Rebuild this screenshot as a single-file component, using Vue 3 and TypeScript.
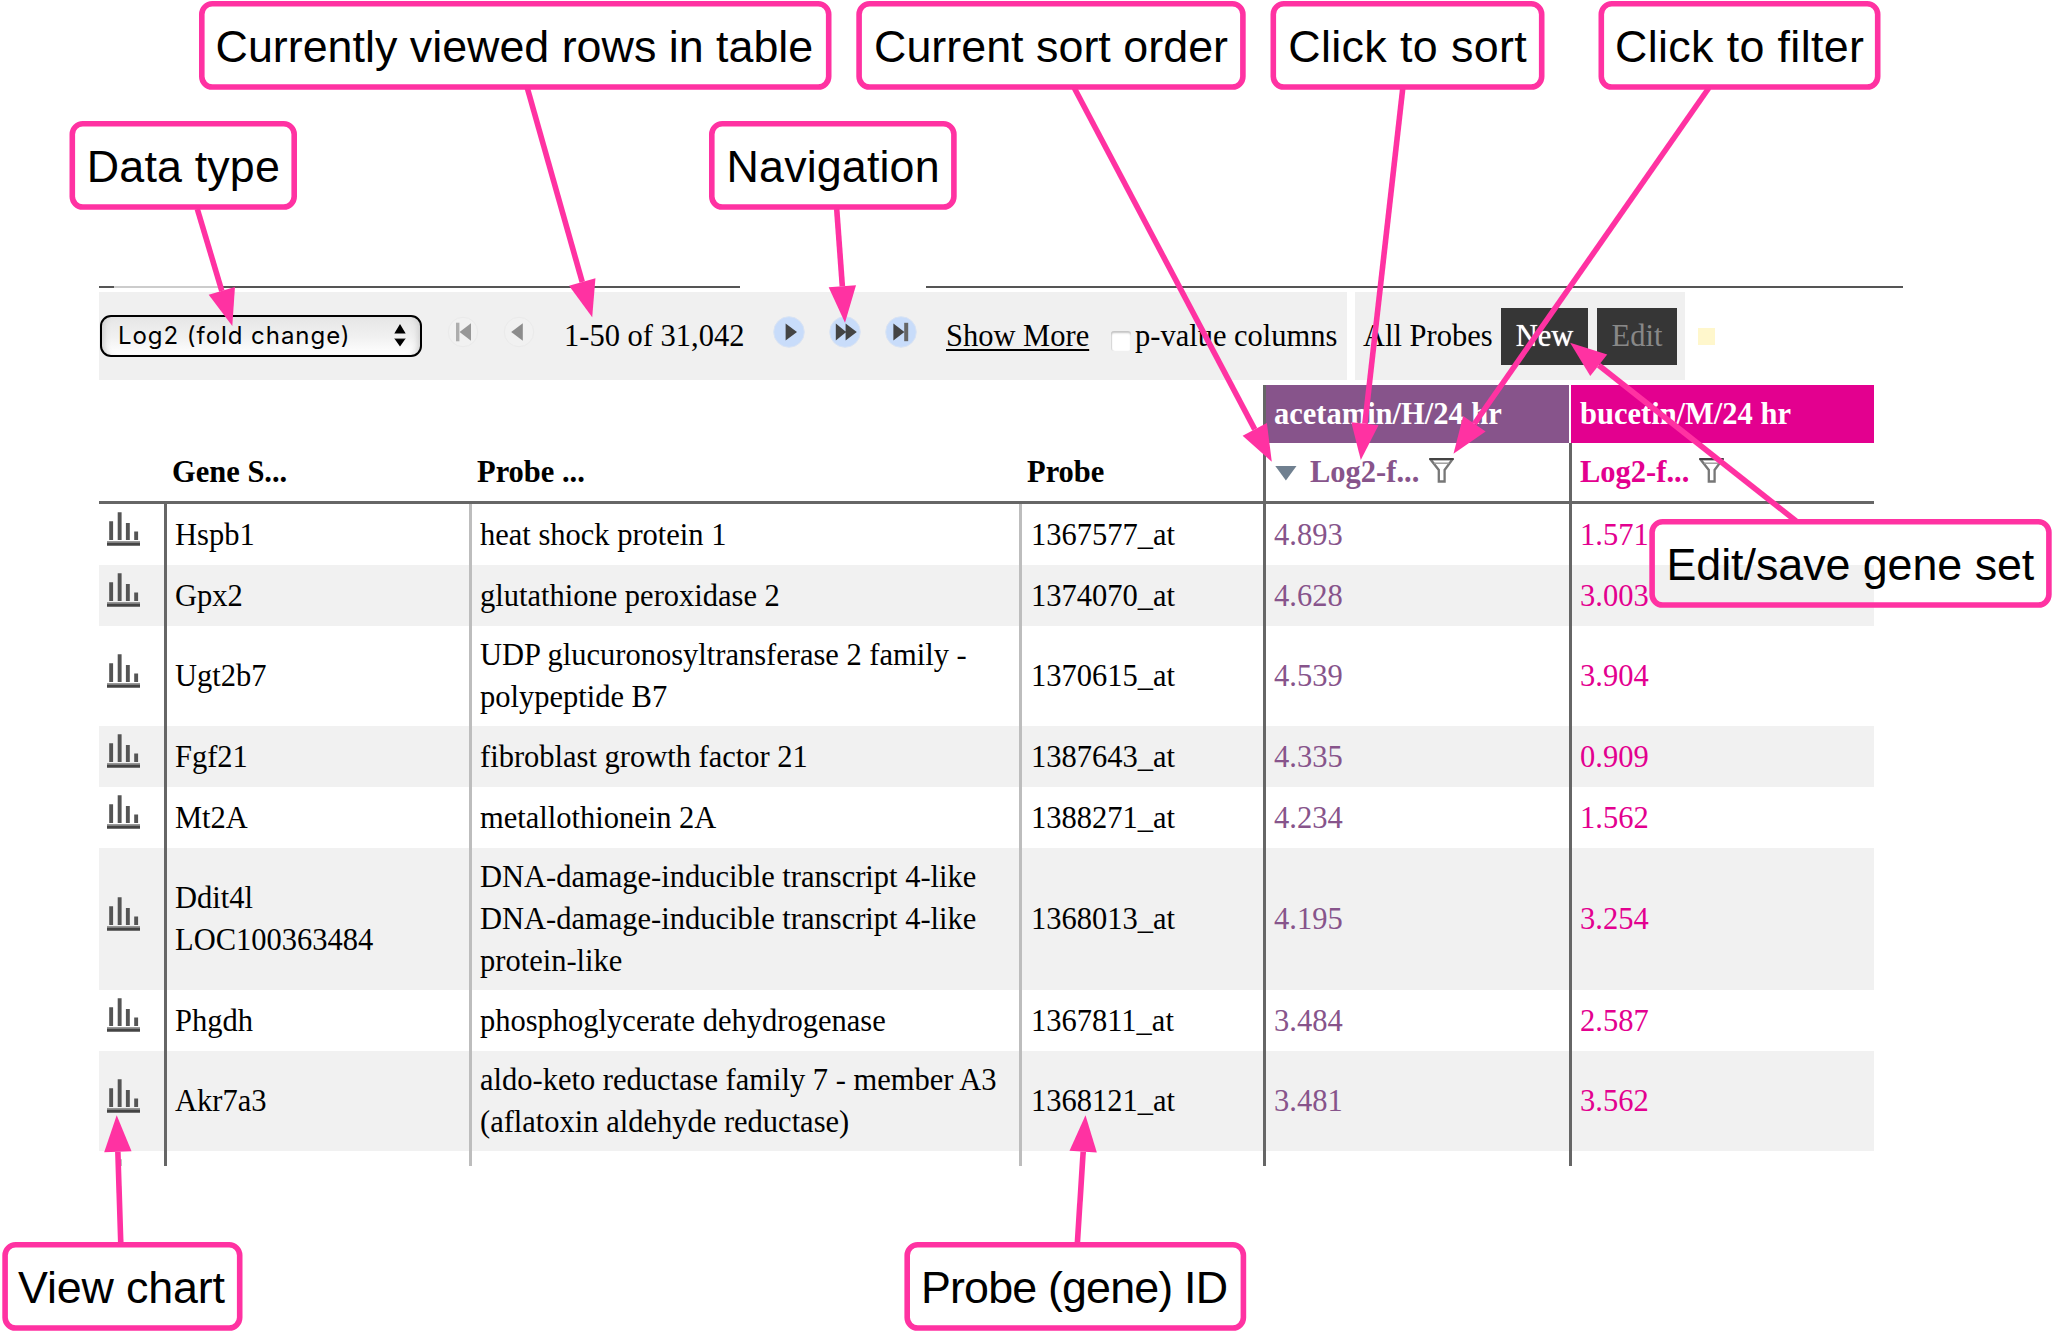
<script setup lang="ts">
interface ProbeRow {
  genes: string[]
  titles: string[]
  id: string
  first: string
  second: string
  height: number
}

interface Callout {
  label: string
  x: number
  y: number
  w: number
  textX: number
  textW: number
  from: [number, number]
  to: [number, number]
}

const rows: ProbeRow[] = [
  { genes: ['Hspb1'], titles: ['heat shock protein 1'], id: '1367577_at', first: '4.893', second: '1.571', height: 61 },
  { genes: ['Gpx2'], titles: ['glutathione peroxidase 2'], id: '1374070_at', first: '4.628', second: '3.003', height: 61 },
  { genes: ['Ugt2b7'], titles: ['UDP glucuronosyltransferase 2 family -', 'polypeptide B7'], id: '1370615_at', first: '4.539', second: '3.904', height: 100 },
  { genes: ['Fgf21'], titles: ['fibroblast growth factor 21'], id: '1387643_at', first: '4.335', second: '0.909', height: 61 },
  { genes: ['Mt2A'], titles: ['metallothionein 2A'], id: '1388271_at', first: '4.234', second: '1.562', height: 61 },
  { genes: ['Ddit4l', 'LOC100363484'], titles: ['DNA-damage-inducible transcript 4-like', 'DNA-damage-inducible transcript 4-like', 'protein-like'], id: '1368013_at', first: '4.195', second: '3.254', height: 142 },
  { genes: ['Phgdh'], titles: ['phosphoglycerate dehydrogenase'], id: '1367811_at', first: '3.484', second: '2.587', height: 61 },
  { genes: ['Akr7a3'], titles: ['aldo-keto reductase family 7 - member A3', '(aflatoxin aldehyde reductase)'], id: '1368121_at', first: '3.481', second: '3.562', height: 100 },
  { genes: [], titles: [], id: '', first: '', second: '', height: 15 },
]

const callouts: Callout[] = [
  { label: 'Currently viewed rows in table', x: 199, y: 1, w: 632.5, textX: 215.6, textW: 597.6, from: [527.3, 88], to: [592.2, 317.2] },
  { label: 'Current sort order', x: 856.3, y: 1, w: 389.4, textX: 874, textW: 354, from: [1074.3, 88], to: [1271.8, 461.7] },
  { label: 'Click to sort', x: 1270.5, y: 1, w: 274, textX: 1288.2, textW: 238.5, from: [1402.8, 88], to: [1360.8, 460] },
  { label: 'Click to filter', x: 1598.5, y: 1, w: 282, textX: 1615, textW: 249, from: [1708.8, 88], to: [1453.5, 453.7] },
  { label: 'Data type', x: 69.5, y: 121, w: 227.5, textX: 86.8, textW: 193, from: [197.3, 209], to: [232.3, 325.9] },
  { label: 'Navigation', x: 709, y: 121, w: 247.7, textX: 726.6, textW: 213, from: [836.7, 209], to: [845, 322.7] },
  { label: 'Edit/save gene set', x: 1649.3, y: 519, w: 402.4, textX: 1666.5, textW: 367.8, from: [1796, 521], to: [1570.1, 342.7] },
  { label: 'View chart', x: 2.3, y: 1242, w: 240.2, textX: 18, textW: 207, from: [120.8, 1244], to: [116.7, 1115.3] },
  { label: 'Probe (gene) ID', x: 904.4, y: 1242, w: 341.8, textX: 921, textW: 307, from: [1077.3, 1244], to: [1085.5, 1115.3] },
]

const HEAD_LENGTH = 36.5
const HEAD_HALF = 13.7

function unit(c: Callout): [number, number] {
  const dx = c.to[0] - c.from[0]
  const dy = c.to[1] - c.from[1]
  const len = Math.hypot(dx, dy)
  return [dx / len, dy / len]
}

function base(c: Callout): [number, number] {
  const [ux, uy] = unit(c)
  return [c.to[0] - ux * HEAD_LENGTH, c.to[1] - uy * HEAD_LENGTH]
}

function head(c: Callout): string {
  const [ux, uy] = unit(c)
  const [bx, by] = base(c)
  return `${c.to[0]},${c.to[1]} ${bx - uy * HEAD_HALF},${by + ux * HEAD_HALF} ${bx + uy * HEAD_HALF},${by - ux * HEAD_HALF}`
}
</script>

<template>
  <div class="page">
    <div class="rule">
      <span class="seg lead"></span>
      <span class="seg pale"></span>
      <span class="seg mid"></span>
      <span class="seg long"></span>
    </div>

    <div class="toolbar">
      <div class="panel table-tools">
        <div class="select">
          <span class="select-label">Log2 (fold change)</span>
          <svg class="stepper" width="12" height="24" viewBox="0 0 12 24">
            <path d="M6 0L11.7 9.4H.3zM6 22.6L11.3 15H.7z" fill="#000" />
            <path d="M.3 14.6h11.4" stroke="#888" stroke-width="1" />
          </svg>
        </div>
        <svg class="nav to-start" width="32" height="32" viewBox="0 0 32 32">
          <circle cx="16" cy="16" r="14.7" fill="#f1f1f1" stroke="#eaeaea" />
          <path d="M9 6.7h3.4v18.6H9z" fill="#adadad" />
          <path d="M24 7.3v17.4L12.6 16z" fill="#979797" />
        </svg>
        <svg class="nav back" width="32" height="32" viewBox="0 0 32 32">
          <circle cx="16" cy="16" r="14.7" fill="#f1f1f1" stroke="#eaeaea" />
          <path d="M19.8 7.3v17.4L8.2 16z" fill="#8c8c8c" />
        </svg>
        <span class="range">1-50 of 31,042</span>
        <svg class="nav play" width="32" height="32" viewBox="0 0 32 32">
          <circle cx="16" cy="16" r="15.3" fill="#c8dcfa" stroke="#d9e3f3" />
          <path d="M12.6 7.5v17L24 16z" fill="#444" />
        </svg>
        <svg class="nav fast" width="32" height="32" viewBox="0 0 32 32">
          <circle cx="16" cy="16" r="15.3" fill="#c8dcfa" stroke="#d9e3f3" />
          <path d="M6.8 7.5v17L17.2 16zM16.6 7.5v17L27.8 16z" fill="#444" />
        </svg>
        <svg class="nav to-end" width="32" height="32" viewBox="0 0 32 32">
          <circle cx="16" cy="16" r="15.3" fill="#c8dcfa" stroke="#d9e3f3" />
          <path d="M8.4 7.5v17L19.4 16z" fill="#444" />
          <path d="M19.2 6.8h4v18.4h-4z" fill="#666" />
        </svg>
        <a class="more">Show More</a>
        <span class="check"></span>
        <span class="check-label">p-value columns</span>
      </div>
      <div class="panel set-tools">
        <span class="set-name">All Probes</span>
        <button class="btn new">New</button>
        <button class="btn edit" disabled>Edit</button>
      </div>
      <span class="status"></span>
    </div>

    <div class="table">
      <div class="row groups">
        <div class="cell group purple">acetamin/H/24 hr</div>
        <div class="cell group pink">bucetin/M/24 hr</div>
      </div>
      <div class="row head">
        <div class="cell icon"></div>
        <div class="cell gene">Gene S...</div>
        <div class="cell title">Probe ...</div>
        <div class="cell probe">Probe</div>
        <div class="cell first">
          <svg class="sort" width="22" height="15" viewBox="0 0 22 15"><path d="M.3 0h21.2L10.9 14.6z" fill="#708090" /></svg>
          <span>Log2-f...</span>
          <svg class="funnel" width="25" height="25" viewBox="0 0 25 25">
            <path d="M1.4 1.3h22.2L15.6 12v11.5H9.8V12z" fill="#fff" stroke="#777" stroke-width="2.3" />
            <path d="M.4 1h24.2" stroke="#444" stroke-width="2" />
            <path d="M5 5.2h15" stroke="#999" stroke-width="1.4" />
          </svg>
        </div>
        <div class="cell second">
          <span>Log2-f...</span>
          <svg class="funnel" width="25" height="25" viewBox="0 0 25 25">
            <path d="M1.4 1.3h22.2L15.6 12v11.5H9.8V12z" fill="#fff" stroke="#777" stroke-width="2.3" />
            <path d="M.4 1h24.2" stroke="#444" stroke-width="2" />
            <path d="M5 5.2h15" stroke="#999" stroke-width="1.4" />
          </svg>
        </div>
      </div>
      <div
        v-for="(row, i) in rows"
        :key="i"
        class="row body"
        :class="{ odd: i % 2 === 1, cut: row.height < 20 }"
        :style="{ height: row.height + 'px' }"
      >
        <div class="cell icon">
          <svg width="34" height="35" viewBox="0 0 34 35">
            <path d="M2.2 9.2h3.9v18.9H2.2zM10.7 .3h3.9v27.8h-3.9zM18.9 11h3.9v17.1h-3.9zM27.2 19.6h3.9v8.5h-3.9z" fill="#555" />
            <path d="M0 29.2h33v1.6H0z" fill="#777" />
            <path d="M0 30.8h33v3H0z" fill="#444" />
          </svg>
        </div>
        <div class="cell gene"><span v-for="(g, n) in row.genes" :key="n">{{ g }}</span></div>
        <div class="cell title"><span v-for="(t, n) in row.titles" :key="n">{{ t }}</span></div>
        <div class="cell probe"><span>{{ row.id }}</span></div>
        <div class="cell first"><span>{{ row.first }}</span></div>
        <div class="cell second"><span>{{ row.second }}</span></div>
      </div>
    </div>

    <svg class="notes" width="2052" height="1333" viewBox="0 0 2052 1333">
      <g v-for="c in callouts" :key="c.label">
        <line :x1="c.from[0]" :y1="c.from[1]" :x2="base(c)[0]" :y2="base(c)[1]" />
        <polygon :points="head(c)" />
        <rect :x="c.x + 2.8" :y="c.y + 2.8" :width="c.w - 5.6" height="83.2" rx="10.5" />
        <text :x="c.textX" :y="c.y + 61.1" :textLength="c.textW">{{ c.label }}</text>
      </g>
    </svg>
  </div>
</template>

<style>
body {
  background: #fff;
}
</style>

<style scoped>
.page {
  position: relative;
  box-sizing: border-box;
  width: 2052px;
  height: 1333px;
  padding: 286px 0 0 99px;
  overflow: hidden;
  background: #fff;
  color: #000;
  font-family: "Liberation Serif", "Times New Roman", serif;
  font-size: 30.5px;
  line-height: 41.8px;
  white-space: nowrap;
}
.rule {
  display: flex;
  height: 2px;
  margin-bottom: 4px;
}
.seg {
  background: #555;
}
.lead { width: 15px; }
.pale { width: 108px; background: #ccc; }
.mid { width: 518px; }
.long { width: 977px; margin-left: 186px; }

.toolbar {
  display: flex;
  align-items: center;
  height: 88px;
}
.panel {
  display: flex;
  align-items: center;
  box-sizing: border-box;
  height: 88px;
  background: #f0f0f0;
}
.panel > * { flex: none; }
.table-tools { width: 1248px; padding-left: 1px; }
.set-tools { width: 330px; margin-left: 8px; padding-left: 8px; }
.select {
  display: flex;
  align-items: center;
  box-sizing: border-box;
  width: 322px;
  height: 42px;
  padding: 0 14px 0 16px;
  justify-content: space-between;
  border: 2px solid #000;
  border-radius: 11px;
  background: linear-gradient(#e6e6e6, #f0f0f0 50%, #fff);
  box-shadow: inset 7px 0 6px -5px #ccc, inset -7px 0 6px -5px #ccc;
}
.select-label {
  font-family: Inter, "Liberation Sans", sans-serif;
  font-size: 24px;
  letter-spacing: 0.95px;
}
.nav { margin: -8px 0 0 24px; }
.nav.to-start { margin-left: 25px; }
.nav.play { margin-left: 29px; }
.range { width: 180px; margin: 2px 0 0 29px; }
.more {
  width: 143px;
  margin: 2px 0 0 29px;
  text-decoration: underline;
  text-decoration-thickness: 2px;
  text-underline-offset: 3px;
}
.check {
  width: 20px;
  height: 20px;
  margin: 9px 0 0 22px;
  border-radius: 3px;
  background: #fff;
  box-shadow: inset 0 2px 2px #c4c4c4, inset 1px 0 1px #ddd;
}
.check-label { margin: 1px 0 0 4px; }
.set-name { width: 138px; margin-top: 2px; }
.btn {
  height: 57px;
  padding: 2px 0 0;
  border: 0;
  background: #363636;
  color: #fff;
  font: inherit;
}
.new { width: 87px; text-shadow: 0 0 1px #fff; }
.edit { width: 80px; margin-left: 9px; color: #888; }
.status { width: 17px; height: 17px; margin-left: 13px; background: #fff7cc; }

.table {
  width: 1775px;
  margin-top: 5px;
}
.row { display: flex; }
.cell { box-sizing: border-box; flex: none; display: flex; }
.groups { height: 58px; padding-left: 1164px; font-weight: bold; color: #fff; }
.group { align-items: center; padding: 1px 0 0 8px; }
.purple { width: 306px; background: #87548b; border-left: 3px solid #666; }
.pink { width: 305px; padding-left: 9px; background: #e3008f; border-left: 2px solid #fff; }
.icon { width: 65px; padding-left: 8px; }
.gene { width: 305px; }
.title { width: 550px; }
.probe { width: 244px; }
.first { width: 306px; color: #87548b; }
.second { width: 305px; color: #e3008f; }

.head {
  box-sizing: border-box;
  height: 61px;
  border-bottom: 3px solid #666;
  font-weight: bold;
}
.head .cell { align-items: center; padding: 2px 0 0 8px; }
.head .first, .head .second { border-left: 3px solid #666; }
.head .first { padding-left: 9px; }
.sort { margin-right: 13px; }
.funnel { margin: -6px 0 0 10px; }

.body .cell {
  flex-direction: column;
  justify-content: center;
  padding: 2px 0 0 8px;
  border-left: 3px solid #666;
}
.body .icon { padding-top: 0; border-left: 0; }
.body .icon svg { margin-top: -10px; }
.body .title, .body .probe { border-left-color: #bdbdbd; }
.body .probe { padding-left: 9px; }
.odd { background: #f1f1f1; }
.cut { overflow: hidden; }
.cut .icon { justify-content: flex-start; }
.cut .icon svg { flex: none; margin-top: 8px; opacity: 0.6; }

.notes {
  position: absolute;
  left: 0;
  top: 0;
  pointer-events: none;
}
.notes line { stroke: #ff32a2; stroke-width: 5.6; }
.notes polygon { fill: #ff32a2; }
.notes rect { fill: none; stroke: #ff32a2; stroke-width: 5.6; }
.notes text {
  font-family: "Liberation Sans", Arial, sans-serif;
  font-size: 44.8px;
}
</style>
